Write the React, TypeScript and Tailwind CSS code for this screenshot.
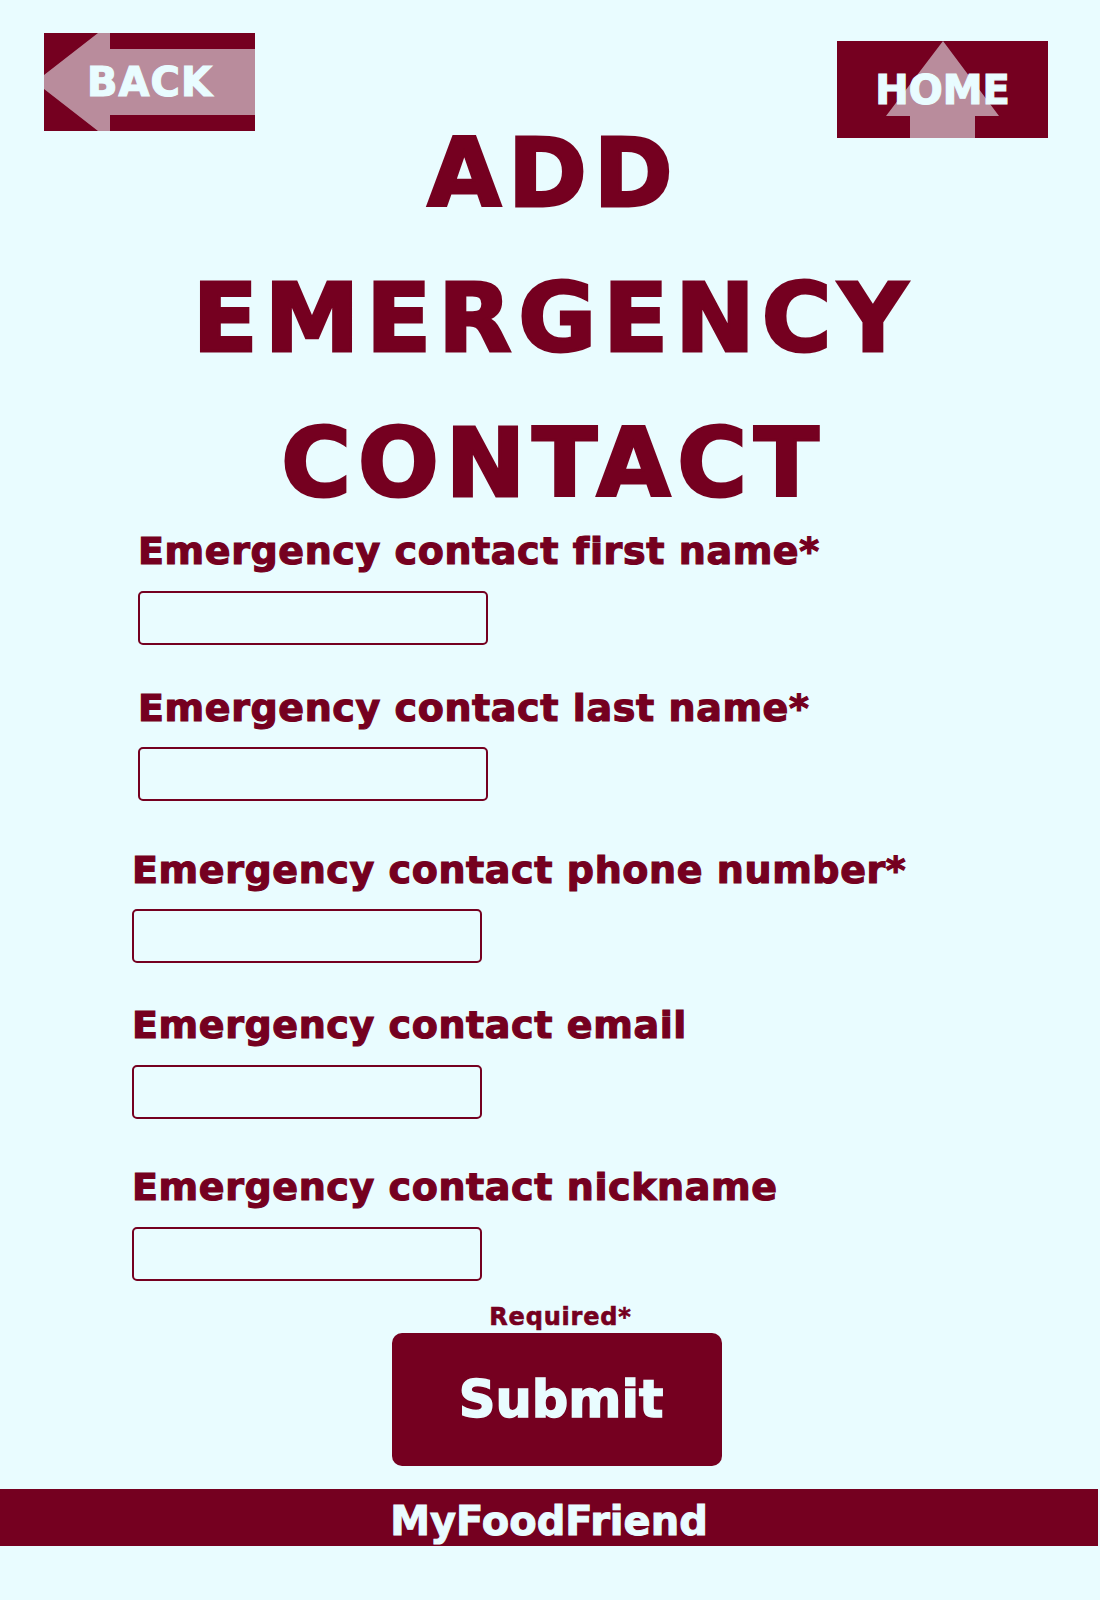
import React from "react";

const DARK = "#750020";

function Field({ label, mt, gap, ml }: { label: string; mt: string; gap: string; ml: string }) {
  return (
    <div className={`flex flex-col items-start ${mt} ${ml}`}>
      <label className="text-[38px] leading-[38px] font-bold tracking-[0.6px] text-[#750020] whitespace-nowrap [font-variant-ligatures:none] [-webkit-text-stroke:1.2px_#750020]">
        {label}
      </label>
      <input
        type="text"
        className={`${gap} w-[350px] h-[54px] rounded-[5px] border-2 border-[#750020] bg-transparent outline-none`}
      />
    </div>
  );
}

export default function App() {
  return (
    <div
      className="w-[1100px] h-[1600px] bg-[#e9fcff] flex flex-col overflow-hidden [font-variant-ligatures:none]"
      style={{ fontFamily: '"DejaVu Sans", sans-serif' }}
    >
      {/* header */}
      <div className="flex justify-between items-start h-[101px] pl-[44px] pr-[52px] pt-[33px]">
        <button className="relative w-[211px] h-[98px] flex items-center justify-center shrink-0">
          <svg className="absolute inset-0" width="211" height="98" viewBox="0 0 211 98">
            <rect x="0" y="0" width="211" height="98" fill={DARK} />
            <polygon
              points="54,0 66,0 66,16 211,16 211,82 66,82 66,98 54,98 0,56 0,42"
              fill="#b98c9c"
            />
          </svg>
          <span className="relative text-[40px] leading-none font-bold tracking-[1px] pl-[1px] text-[#e9fcff] [-webkit-text-stroke:1.2px_#e9fcff]">
            BACK
          </span>
        </button>
        <button className="relative mt-[8px] w-[211px] h-[97px] flex items-center justify-center shrink-0">
          <svg className="absolute inset-0" width="211" height="97" viewBox="0 0 211 97">
            <rect x="0" y="0" width="211" height="97" fill={DARK} />
            <polygon points="106,0 162,75 138,75 138,97 73,97 73,75 49,75" fill="#b98c9c" />
          </svg>
          <span className="relative text-[40px] leading-none font-bold text-[#e9fcff] [-webkit-text-stroke:1.2px_#e9fcff]">
            HOME
          </span>
        </button>
      </div>

      {/* title */}
      <h1 className="text-center text-[95px] leading-[145px] font-bold tracking-[7px] pl-[7px] text-[#750020] [-webkit-text-stroke:3px_#750020]">
        <span className="block">ADD</span>
        <span className="block">EMERGENCY</span>
        <span className="block">CONTACT</span>
      </h1>

      {/* form */}
      <Field label="Emergency contact first name*" mt="-mt-[4px]" gap="mt-[21px]" ml="ml-[138px]" />
      <Field label="Emergency contact last name*" mt="mt-[44px]" gap="mt-[20px]" ml="ml-[138px]" />
      <Field label="Emergency contact phone number*" mt="mt-[50px]" gap="mt-[20px]" ml="ml-[132px]" />
      <Field label="Emergency contact email" mt="mt-[43px]" gap="mt-[21px]" ml="ml-[132px]" />
      <Field label="Emergency contact nickname" mt="mt-[49px]" gap="mt-[21px]" ml="ml-[132px]" />

      <div className="flex flex-col items-center pl-[14px] mt-[24px]">
        <p className="ml-[7px] text-[24px] leading-[24px] font-bold tracking-[0.8px] text-[#750020] [-webkit-text-stroke:0.6px_#750020]">
          Required*
        </p>
        <button className="mt-[4px] w-[330px] h-[133px] rounded-[10px] bg-[#750020] flex items-center justify-center">
          <span className="ml-[8px] text-[51px] leading-none font-bold text-[#e9fcff] [-webkit-text-stroke:1.5px_#e9fcff]">
            Submit
          </span>
        </button>
      </div>

      {/* footer */}
      <footer className="mt-[23px] w-[1098px] h-[57px] bg-[#750020] flex justify-center pt-[12px]">
        <span className="text-[40px] leading-[40px] font-bold text-[#e9fcff] [-webkit-text-stroke:1px_#e9fcff]">
          MyFoodFriend
        </span>
      </footer>
    </div>
  );
}
